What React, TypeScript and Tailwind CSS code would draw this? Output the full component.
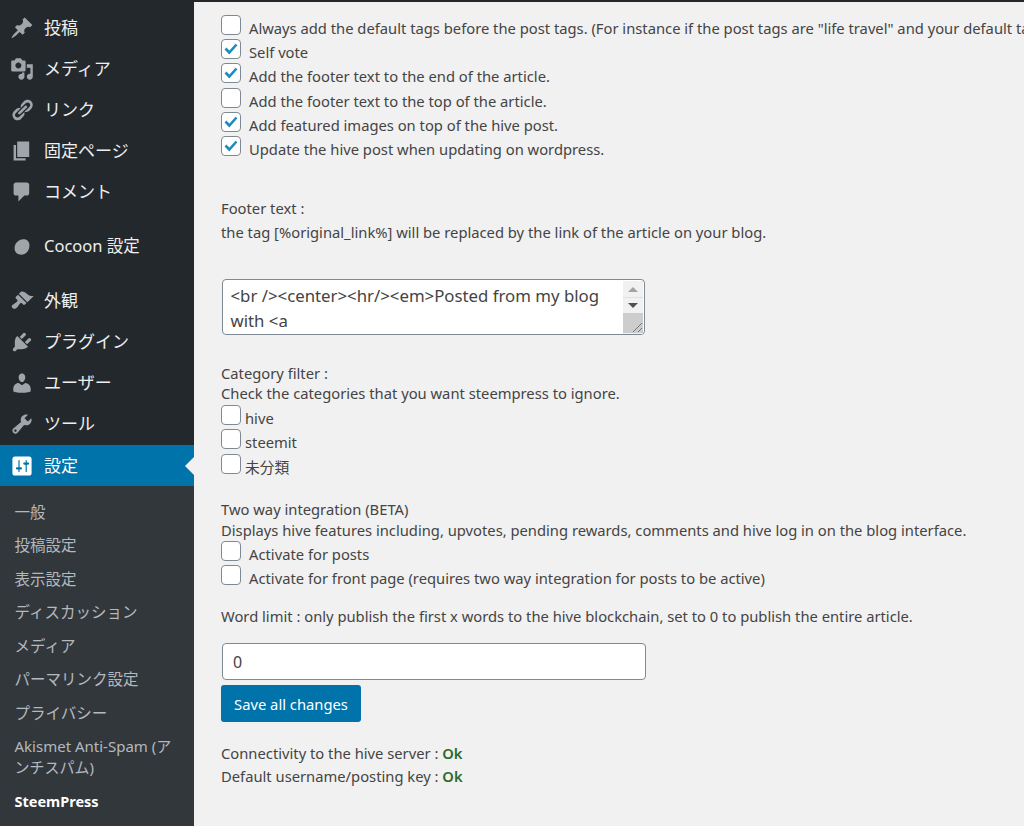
import React from 'react';

// dashicons-style paths, 20x20 box
const icons: Record<string, string> = {
  post: 'M10.44 3.02l1.82-1.82 6.36 6.35-1.83 1.82c-1.05-.68-2.48-.57-3.41.36l-.75.75c-.92.93-1.04 2.35-.35 3.41l-1.83 1.82-2.41-2.41-2.8 2.79c-.42.42-3.38 2.71-3.8 2.29s1.86-3.39 2.28-3.81l2.79-2.79L4.1 9.36l1.83-1.82c1.05.69 2.48.57 3.41-.36l.75-.75c.93-.92 1.05-2.35.35-3.41z',
  media: 'M13 11V4c0-.55-.45-1-1-1h-1.67L9 1H5L3.67 3H2c-.55 0-1 .45-1 1v7c0 .55.45 1 1 1h10c.55 0 1-.45 1-1zM7 4.5c1.38 0 2.5 1.12 2.5 2.5S8.38 9.5 7 9.5 4.5 8.38 4.5 7 5.62 4.5 7 4.5zM14 6h5v10.5c0 1.38-1.12 2.5-2.5 2.5S14 17.88 14 16.5s1.12-2.5 2.5-2.5c.17 0 .34.02.5.05V9h-3V6zm-4 8.05V13h2v3.5c0 1.38-1.12 2.5-2.5 2.5S7 17.88 7 16.5 8.12 14 9.5 14c.17 0 .34.02.5.05z',
  links: 'M17.74 2.76c1.68 1.69 1.68 4.41 0 6.1l-1.53 1.52c-1.12 1.12-2.7 1.47-4.14 1.09l2.62-2.61.76-.77.76-.76c.84-.84.84-2.2 0-3.04-.84-.85-2.2-.85-3.04 0l-.77.76-3.38 3.38c-.37-1.44-.02-3.02 1.1-4.14l1.52-1.53c1.69-1.68 4.42-1.68 6.1 0zM8.59 13.43l5.34-5.34c.42-.42.42-1.1 0-1.52-.44-.43-1.13-.39-1.53 0l-5.33 5.34c-.42.42-.42 1.1 0 1.52.44.43 1.13.39 1.52 0zm-.76 2.29l4.14-4.15c.38 1.44.03 3.02-1.09 4.14l-1.52 1.53c-1.69 1.68-4.41 1.68-6.1 0-1.68-1.68-1.68-4.42 0-6.1l1.53-1.52c1.12-1.12 2.7-1.47 4.14-1.1l-4.14 4.15c-.85.84-.85 2.2 0 3.05.84.84 2.2.84 3.04 0z',
  page: 'M6 15V2h10v13H6zm-1 1h8v2H3V5h2v11z',
  comments: 'M5 2h9c1.1 0 2 .9 2 2v7c0 1.1-.9 2-2 2h-2l-5 5v-5H5c-1.1 0-2-.9-2-2V4c0-1.1.9-2 2-2z',
  cocoon: 'M11 3.600c3.300-.2 5.200 2 5.200 5.100 0 4.300-3 7.700-6.700 7.700-3.300 0-5.700-2.200-5.700-5.400 0-4 3.300-7.100 7.200-7.400z',
  appearance: 'M14.48 11.06L7.41 3.99l1.5-1.5c.5-.56 2.3-.47 3.51.32 1.21.8 1.43 1.28 2.91 2.1 1.18.64 2.45 1.26 4.45.85zm-.71.71L6.7 4.7 4.93 6.47c-.39.39-.39 1.02 0 1.41l1.06 1.06c.39.39.39 1.03 0 1.42-.6.6-1.43 1.11-2.21 1.69-.35.26-.7.53-1.01.84C1.43 13.23.78 14.49 2.08 15.8c1.3 1.3 2.57.65 3.91-.69.31-.31.58-.66.85-1.02.57-.78 1.08-1.61 1.69-2.21.39-.39 1.02-.39 1.41 0l1.06 1.06c.39.39 1.02.39 1.41 0z',
  plugins: 'M13.11 4.36L9.87 7.6 8 5.73l3.24-3.24c.35-.34 1.05-.2 1.56.32.52.51.66 1.21.31 1.55zm-8 1.77l.91-1.12 9.01 9.01-1.19.84c-.71.71-2.63 1.16-3.82 1.16H6.14L4.9 17.26c-.59.59-1.54.59-2.12 0-.59-.58-.59-1.53 0-2.12l1.24-1.24v-3.88c0-1.13.4-3.19 1.09-3.89zm7.26 3.97l3.24-3.24c.34-.35 1.04-.21 1.55.31.52.51.66 1.21.31 1.55l-3.24 3.25z',
  users: 'M10 9.25c-2.27 0-2.73-3.44-2.73-3.44C7 4.02 7.82 2 9.97 2c2.16 0 2.98 2.02 2.71 3.81 0 0-.41 3.44-2.68 3.44zm0 2.57L12.72 10c2.39 0 4.52 2.33 4.52 4.53v2.49s-3.65 1.13-7.24 1.13c-3.65 0-7.24-1.13-7.24-1.13v-2.49c0-2.25 1.94-4.53 4.47-4.53z',
  tools: 'M16.68 9.77c-1.34 1.34-3.3 1.67-4.95.99l-5.41 6.52c-.99.99-2.59.99-3.58 0s-.99-2.59 0-3.57l6.52-5.42c-.68-1.65-.35-3.61.99-4.95 1.28-1.28 3.12-1.62 4.72-1.06l-2.89 2.89 2.82 2.82 2.86-2.87c.53 1.58.18 3.39-1.08 4.65zM3.81 16.21c.4.39 1.04.39 1.43 0 .4-.4.4-1.04 0-1.43-.39-.4-1.03-.4-1.43 0-.39.39-.39 1.03 0 1.43z',
  settings: 'M18 16V4c0-1.1-.9-2-2-2H4c-1.1 0-2 .9-2 2v12c0 1.1.9 2 2 2h12c1.1 0 2-.9 2-2zM8 11h1c.55 0 1 .45 1 1s-.45 1-1 1H8v1.5c0 .28-.22.5-.5.5s-.5-.22-.5-.5V13H6c-.55 0-1-.45-1-1s.45-1 1-1h1V5.5c0-.28.22-.5.5-.5s.5.22.5.5V11zm5-2h-1c-.55 0-1-.45-1-1s.45-1 1-1h1V5.5c0-.28.22-.5.5-.5s.5.22.5.5V7h1c.55 0 1 .45 1 1s-.45 1-1 1h-1v5.5c0 .28-.22.5-.5.5s-.5-.22-.5-.5V9z',
};

const MenuItem: React.FC<{ icon: string; label: string; className?: string; textClass?: string }> = ({ icon, label, className = '', textClass = 'text-[17px]' }) => (
  <div className={`flex items-center h-[41px] pl-[9.5px] text-[#eeeeee] ${className}`}>
    <svg width="24" height="24" viewBox="0 0 20 20" className="shrink-0 fill-[#a0a5aa]">
      <path d={icons[icon]} />
    </svg>
    <span className={`ml-[10.5px] whitespace-nowrap ${textClass}`}>{label}</span>
  </div>
);

const Check: React.FC<{ on?: boolean }> = ({ on }) => (
  <span className="flex items-center justify-center w-[20px] h-[20px] shrink-0 bg-white border border-[#7e8993] rounded-[4px]">
    {on && (
      <svg width="16" height="16" viewBox="0 0 16 16" fill="none">
        <path d="M2.500 7.500 L6.300 11.500 L13.500 3.500" stroke="#1e8cbe" strokeWidth="2.600" />
      </svg>
    )}
  </span>
);

const CheckRow: React.FC<{ on?: boolean; label: string; gap?: string }> = ({ on, label, gap = 'gap-[8px]' }) => (
  <div className={`flex h-[24.2px] ${gap}`}>
    <div className="-mt-[1px]"><Check on={on} /></div>
    <span className="whitespace-nowrap leading-[24px]">{label}</span>
  </div>
);

const subItems = ['一般', '投稿設定', '表示設定', 'ディスカッション', 'メディア', 'パーマリンク設定', 'プライバシー'];

export default function App() {
  return (
    <div className="flex w-[1024px] h-[826px] overflow-hidden bg-[#f1f1f1] font-['Noto_Sans','Noto_Sans_CJK_JP',sans-serif]">
      {/* sidebar */}
      <div className="w-[194px] shrink-0 flex flex-col bg-[#23282d]">
        <div className="pt-[7px]">
          <MenuItem icon="post" label="投稿" />
          <MenuItem icon="media" label="メディア" />
          <MenuItem icon="links" label="リンク" />
          <MenuItem icon="page" label="固定ページ" />
          <MenuItem icon="comments" label="コメント" />
          <MenuItem icon="cocoon" label="Cocoon 設定" className="mt-[14px]" textClass="text-[16.500px]" />
          <MenuItem icon="appearance" label="外観" className="mt-[13px]" />
          <MenuItem icon="plugins" label="プラグイン" />
          <MenuItem icon="users" label="ユーザー" />
          <MenuItem icon="tools" label="ツール" />
        </div>
        <div className="mt-[1px] flex items-center h-[41px] pl-[9.5px] bg-[#0073aa] text-white">
          <svg width="24" height="24" viewBox="0 0 20 20" className="shrink-0 fill-white">
            <path d={icons.settings} />
          </svg>
          <span className="ml-[10.5px] text-[17px]">設定</span>
          <span className="ml-auto w-0 h-0 border-y-[9px] border-y-transparent border-r-[9px] border-r-[#f1f1f1]" />
        </div>
        <div className="flex-1 bg-[#32373c] pt-[9.500px] pl-[14.500px] text-[15.500px] text-[#b4b9be]">
          {subItems.map((s) => (
            <div key={s} className="h-[33.500px] flex items-center whitespace-nowrap">{s}</div>
          ))}
          <div className="pt-[6px] pb-[7px] pr-[14px] text-[15px] leading-[21px]">
            Akismet Anti-Spam (アンチスパム)
          </div>
          <div className="h-[33.500px] flex items-center text-[14.500px] font-bold text-white">SteemPress</div>
        </div>
      </div>

      {/* main */}
      <div className="flex-1 min-w-0 overflow-hidden text-[14.750px] text-[#444444]">
        <div className="h-[2px] bg-[#23282d]" />
        <div className="pl-[27px] pt-[14px]">
          <CheckRow label={'Always add the default tags before the post tags. (For instance if the post tags are "life travel" and your default tags'} />
          <CheckRow on label="Self vote" />
          <CheckRow on label="Add the footer text to the end of the article." />
          <CheckRow label="Add the footer text to the top of the article." />
          <CheckRow on label="Add featured images on top of the hive post." />
          <CheckRow on label="Update the hive post when updating on wordpress." />

          <p className="mt-[36px] leading-[23px]">Footer text :</p>
          <p className="mt-[1px] leading-[23px]">the tag [%original_link%] will be replaced by the link of the article on your blog.</p>

          {/* textarea */}
          <div className="mt-[35px] ml-[1px] w-[423px] h-[56px] flex bg-white border border-[#7e8993] rounded-[4px] overflow-hidden">
            <div className="flex-1 pl-[7.500px] pr-[6px] pt-[4px] text-[16.800px] leading-[24.500px]">
              &lt;br /&gt;&lt;center&gt;&lt;hr/&gt;&lt;em&gt;Posted from my blog with &lt;a
            </div>
            <div className="w-[20px] mt-[1px] mr-[1px] flex flex-col bg-[#f1f1f1]">
              <div className="h-[17px] flex items-center justify-center border-b border-[#e0e0e0]">
                <span className="w-0 h-0 border-x-[5px] border-x-transparent border-b-[5px] border-b-[#a3a3a3]" />
              </div>
              <div className="h-[15px] flex items-center justify-center">
                <span className="w-0 h-0 border-x-[5px] border-x-transparent border-t-[5px] border-t-[#505050]" />
              </div>
              <div className="flex-1 mb-[1px] bg-[#cdcdcd] flex items-end justify-end">
                <svg width="12" height="12" viewBox="0 0 12 12" fill="none" stroke="#777777" strokeWidth="1">
                  <path d="M2 11 L11 2 M7 11 L11 7" />
                </svg>
              </div>
            </div>
          </div>

          <p className="mt-[28px] leading-[21px]">Category filter :</p>
          <p className="-mt-[1px] leading-[21px]">Check the categories that you want steempress to ignore.</p>
          <div className="mt-[2px]">
            <CheckRow label="hive" gap="gap-[4px]" />
            <CheckRow label="steemit" gap="gap-[4px]" />
            <CheckRow label="未分類" gap="gap-[4px]" />
          </div>

          <p className="mt-[19px] leading-[22px]">Two way integration (BETA)</p>
          <p className="-mt-[1px] leading-[22px]">Displays hive features including, upvotes, pending rewards, comments and hive log in on the blog interface.</p>
          <div className="mt-[1px]">
            <CheckRow label="Activate for posts" />
            <CheckRow label="Activate for front page (requires two way integration for posts to be active)" />
          </div>

          <p className="mt-[15px] leading-[22px]">Word limit : only publish the first x words to the hive blockchain, set to 0 to publish the entire article.</p>

          <div className="mt-[16px] ml-[1px] w-[424px] h-[37px] pl-[10px] flex items-center bg-white border border-[#7e8993] rounded-[4px] text-[16px]">0</div>
          <div className="mt-[5px] w-[140px] h-[37px] flex items-center justify-center bg-[#0073aa] rounded-[3px] text-white">Save all changes</div>

          <p className="mt-[20px] leading-[23px]">Connectivity to the hive server : <span className="font-semibold text-[#2a6b2a]">Ok</span></p>
          <p className="leading-[23px]">Default username/posting key : <span className="font-semibold text-[#2a6b2a]">Ok</span></p>
        </div>
      </div>
    </div>
  );
}
